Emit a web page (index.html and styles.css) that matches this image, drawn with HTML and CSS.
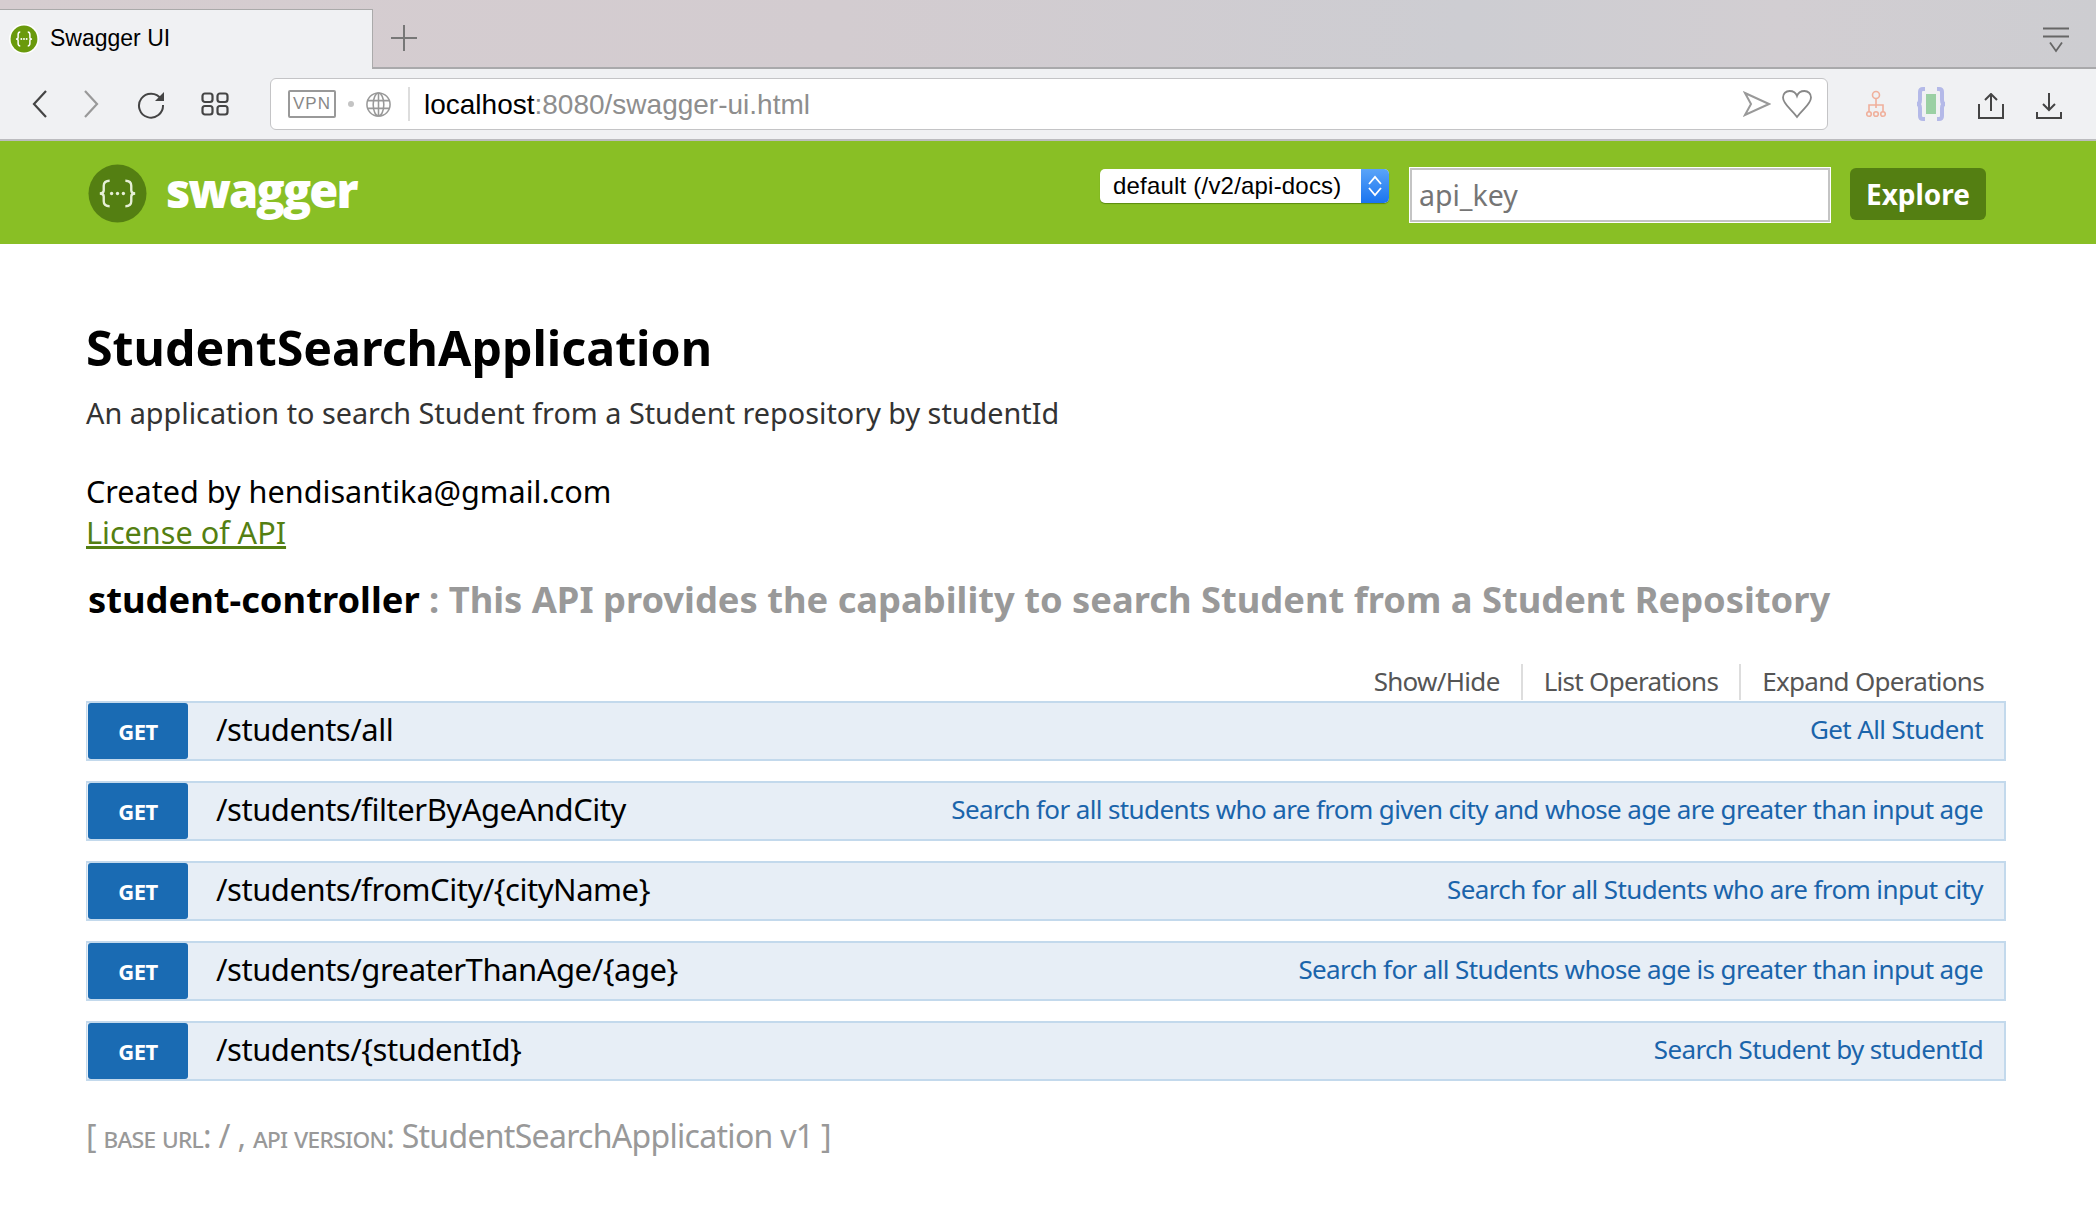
FILE: index.html
```html
<!DOCTYPE html>
<html lang="en">
<head>
  <meta charset="UTF-8" />
  <title>Swagger UI</title>
  <link rel="stylesheet" href="styles.css">
</head>
<body>
<div class="tabstrip">
  <div class="tab">
    <svg class="favicon" viewBox="0 0 28 28"><circle cx="14" cy="14" r="14" fill="#fff"/><circle cx="14" cy="14" r="12.500" fill="#6a9a0c"/><path d="M10.500 7.500 Q8.500 7.500 8.500 10 V12.500 Q8.500 14 6.500 14 Q8.500 14 8.500 15.500 V18 Q8.500 20.500 10.500 20.500 M17.500 7.500 Q19.500 7.500 19.500 10 V12.500 Q19.500 14 21.500 14 Q19.500 14 19.500 15.500 V18 Q19.500 20.500 17.500 20.500" fill="none" stroke="#fff" stroke-width="1.400"/><circle cx="11.500" cy="14" r=".9" fill="#fff"/><circle cx="14" cy="14" r=".9" fill="#fff"/><circle cx="16.500" cy="14" r=".9" fill="#fff"/></svg>
    <span>Swagger UI</span>
  </div>
  <svg class="newtab" viewBox="0 0 26 26"><path d="M13 0V26M0 13H26" stroke="#777" stroke-width="2"/></svg>
  <svg class="tablist" viewBox="0 0 26 26"><path d="M0 1.500H26M0 9.500H26" stroke="#666" stroke-width="2.200"/><path d="M7 15.500L13 24L19 15.500" fill="none" stroke="#666" stroke-width="1.800"/></svg>
</div>

<div class="toolbar">
  <div class="navbtns">
    <svg class="ico-back" viewBox="0 0 18 30"><path d="M15 2L3 15L15 28" fill="none" stroke="#444" stroke-width="2.200"/></svg>
    <svg class="ico-fwd" viewBox="0 0 18 30"><path d="M3 2L15 15L3 28" fill="none" stroke="#999" stroke-width="2.200"/></svg>
    <svg class="ico-reload" viewBox="0 0 30 30"><path d="M25 10A12 12 0 1 0 27 16" fill="none" stroke="#444" stroke-width="2"/><path d="M28 3V12H19Z" fill="#444"/></svg>
    <svg class="ico-grid" viewBox="0 0 28 24"><g fill="none" stroke="#444" stroke-width="2.200"><rect x="1.500" y="1.500" width="10" height="8.500" rx="2.500"/><rect x="16.500" y="1.500" width="10" height="8.500" rx="2.500"/><rect x="1.500" y="14" width="10" height="8.500" rx="2.500"/><rect x="16.500" y="14" width="10" height="8.500" rx="2.500"/></g></svg>
  </div>
  <div class="urlbar">
    <span class="vpn">VPN</span>
    <span class="dot"></span>
    <svg class="ico-globe" viewBox="0 0 28 28"><g fill="none" stroke="#999" stroke-width="1.600"><circle cx="14" cy="14" r="12"/><ellipse cx="14" cy="14" rx="5.500" ry="12"/><path d="M14 2V26M2.500 10H25.500M2.500 18H25.500"/></g></svg>
    <span class="url"><b>localhost</b>:8080/swagger-ui.html</span>
    <svg class="ico-send" viewBox="0 0 28 28"><path d="M2 3L26 14L2 25L8 14Z" fill="none" stroke="#999" stroke-width="2"/></svg>
    <svg class="ico-heart" viewBox="0 0 32 30"><path d="M16 28C10 20 2 15 2 8.500C2 4.500 5 2 8.500 2C12 2 15 4 16 7C17 4 20 2 23.500 2C27 2 30 4.500 30 8.500C30 15 22 20 16 28Z" fill="none" stroke="#888" stroke-width="1.800"/></svg>
  </div>
  <div class="extbtns">
    <svg class="ico-tree" viewBox="0 0 20 28"><g fill="none" stroke="#f0b09c" stroke-width="1.600"><circle cx="10" cy="5" r="3.500"/><path d="M10 8.500V18M3 22V15H17V22"/><circle cx="3" cy="24" r="2.300"/><circle cx="10" cy="24" r="2.300"/><circle cx="17" cy="24" r="2.300"/></g></svg>
    <svg class="ico-brace" viewBox="0 0 32 34"><path d="M10 2H8Q5 2 5 5V13Q5 17 2 17Q5 17 5 21V29Q5 32 8 32H10M22 2H24Q27 2 27 5V13Q27 17 30 17Q27 17 27 21V29Q27 32 24 32H22" fill="none" stroke="#b4b9e8" stroke-width="4"/><rect x="11" y="7" width="10" height="20" fill="#9bd0a4"/></svg>
    <svg class="ico-share" viewBox="0 0 28 26"><path d="M14 18V1M8 7L14 1L20 7" fill="none" stroke="#444" stroke-width="2"/><path d="M2 11V25H26V11" fill="none" stroke="#444" stroke-width="2"/></svg>
    <svg class="ico-down" viewBox="0 0 28 26"><path d="M14 0V17M8 11L14 17L20 11" fill="none" stroke="#444" stroke-width="2"/><path d="M2 19V25H26V19" fill="none" stroke="#444" stroke-width="2"/></svg>
  </div>
</div>

<header class="swagger-header">
  <div class="logo">
    <svg class="logo-mark" viewBox="0 0 60 60"><circle cx="30" cy="30" r="29.500" fill="#547f12"/><path d="M22 17Q16 17 16 22V27Q16 30 12 30Q16 30 16 33V38Q16 43 22 43M38 17Q44 17 44 22V27Q44 30 48 30Q44 30 44 33V38Q44 43 38 43" fill="none" stroke="#e6efd6" stroke-width="2.400"/><circle cx="24" cy="30" r="1.700" fill="#e6efd6"/><circle cx="30" cy="30" r="1.700" fill="#e6efd6"/><circle cx="36" cy="30" r="1.700" fill="#e6efd6"/></svg>
    <span class="logo-text">swagger</span>
  </div>
  <div class="api-form">
    <div class="spec-select">
      <span class="spec-label">default (/v2/api-docs)</span>
      <span class="spec-arrows"><svg viewBox="0 0 16 22"><path d="M2 9L8 2L14 9M2 13L8 20L14 13" fill="none" stroke="#fff" stroke-width="1.800"/></svg></span>
    </div>
    <input class="api-key" type="text" placeholder="api_key" />
    <button class="explore">Explore</button>
  </div>
</header>

<main class="content">
  <h1 class="info-title">StudentSearchApplication</h1>
  <p class="info-desc">An application to search Student from a Student repository by studentId</p>
  <p class="info-contact">Created by hendisantika@gmail.com</p>
  <a class="info-license" href="#">License of API</a>

  <h2 class="resource"><span class="resource-name">student-controller</span> <span class="resource-desc">: This API provides the capability to search Student from a Student Repository</span></h2>

  <ul class="options">
    <li>Show/Hide</li>
    <li>List Operations</li>
    <li>Expand Operations</li>
  </ul>

  <div class="operation"><span class="verb">GET</span><span class="path">/students/all</span><span class="summary">Get All Student</span></div>
  <div class="operation"><span class="verb">GET</span><span class="path">/students/filterByAgeAndCity</span><span class="summary">Search for all students who are from given city and whose age are greater than input age</span></div>
  <div class="operation"><span class="verb">GET</span><span class="path">/students/fromCity/{cityName}</span><span class="summary">Search for all Students who are from input city</span></div>
  <div class="operation"><span class="verb">GET</span><span class="path">/students/greaterThanAge/{age}</span><span class="summary">Search for all Students whose age is greater than input age</span></div>
  <div class="operation"><span class="verb">GET</span><span class="path">/students/{studentId}</span><span class="summary">Search Student by studentId</span></div>

  <p class="footer-info">[ <span class="sc">base url</span>: / , <span class="sc">api version</span>: StudentSearchApplication v1 ]</p>
</main>
</body>
</html>
```

FILE: styles.css
```css
body {
  margin: 0;
  background: #fff;
  font-family: "Noto Sans", "Open Sans", sans-serif;
  color: #000;
}

/* browser chrome */
.tabstrip {
  display: flex;
  align-items: flex-end;
  height: 69px;
  box-sizing: border-box;
  border-bottom: 2px solid #a9a9ab;
  background: linear-gradient(90deg, #d6cdd0 0%, #d3ccd0 40%, #cdcdd2 70%, #d2ced2 85%, #cdcdd1 100%);
}
.tab {
  display: flex;
  align-items: center;
  width: 373px;
  height: 60px;
  margin-bottom: -2px;
  box-sizing: border-box;
  padding: 0 0 2px 9px;
  background: #f0f1f3;
  border-top: 1px solid #aaa;
  border-right: 1px solid #aaa;
  font-family: "Liberation Sans", sans-serif;
  font-size: 23px;
}
.favicon {
  width: 30px;
  height: 30px;
  margin-right: 11px;
}
.newtab {
  width: 26px;
  height: 26px;
  margin: 0 0 16px 18px;
}
.tablist {
  width: 26px;
  height: 26px;
  margin: 0 27px 14px auto;
}
.toolbar {
  display: flex;
  align-items: center;
  height: 72px;
  box-sizing: border-box;
  background: #f0f1f3;
  border-bottom: 2px solid #bcbcbf;
}
.navbtns {
  display: flex;
  align-items: center;
  width: 270px;
  padding-left: 31px;
  box-sizing: border-box;
}
.ico-back, .ico-fwd {
  width: 18px;
  height: 30px;
}
.ico-fwd { margin-left: 33px; }
.ico-reload {
  width: 30px;
  height: 30px;
  margin-left: 36px;
}
.ico-grid {
  width: 28px;
  height: 24px;
  margin-left: 35px;
}
.urlbar {
  display: flex;
  align-items: center;
  width: 1558px;
  height: 52px;
  box-sizing: border-box;
  padding: 0 14px 0 17px;
  background: #fff;
  border: 1px solid #c4c4c6;
  border-radius: 6px;
}
.vpn {
  box-sizing: border-box;
  width: 48px;
  height: 28px;
  line-height: 24px;
  text-align: center;
  border: 2px solid #999;
  border-radius: 2px;
  color: #888;
  font-family: "Liberation Sans", sans-serif;
  font-size: 17px;
  letter-spacing: 1px;
}
.dot {
  width: 6px;
  height: 6px;
  margin-left: 12px;
  border-radius: 50%;
  background: #c4c4c4;
}
.ico-globe {
  width: 27px;
  height: 27px;
  margin: 0 16px 0 11px;
}
.url {
  flex: 1;
  height: 34px;
  padding-left: 14px;
  line-height: 36px;
  border-left: 2px solid #ddd;
  font-family: "Liberation Sans", sans-serif;
  font-size: 28px;
  color: #8e8e8e;
}
.url b {
  font-weight: normal;
  color: #000;
}
.ico-send {
  width: 28px;
  height: 28px;
}
.ico-heart {
  width: 32px;
  height: 30px;
  margin-left: 10px;
}
.extbtns {
  display: flex;
  align-items: center;
  padding-left: 38px;
}
.ico-tree {
  width: 20px;
  height: 28px;
}
.ico-brace {
  width: 32px;
  height: 34px;
  margin-left: 29px;
}
.ico-share {
  width: 28px;
  height: 26px;
  margin: 3px 0 0 30px;
}
.ico-down {
  width: 28px;
  height: 26px;
  margin: 3px 0 0 30px;
}

/* swagger header */
.swagger-header {
  display: flex;
  align-items: center;
  height: 103px;
  padding: 0 110px 0 88px;
  background: #89bf25;
}
.logo {
  display: flex;
  align-items: center;
}
.logo-mark {
  width: 59px;
  height: 59px;
  margin-top: 2px;
}
.logo-text {
  margin: -6px 0 0 19px;
  color: #fff;
  font-family: "Open Sans", sans-serif;
  font-size: 47px;
  font-weight: 800;
  letter-spacing: -2px;
}
.api-form {
  display: flex;
  align-items: center;
  margin-left: auto;
}
.spec-select {
  display: flex;
  width: 289px;
  height: 34px;
  margin-top: -13px;
  background: #fff;
  border-radius: 5px;
  box-shadow: 0 1px 1px #5b8a10;
  overflow: hidden;
}
.spec-label {
  flex: 1;
  padding-left: 13px;
  line-height: 33px;
  font-family: "Liberation Sans", sans-serif;
  font-size: 24px;
  letter-spacing: .2px;
  white-space: nowrap;
}
.spec-arrows {
  display: flex;
  flex: none;
  align-items: center;
  justify-content: center;
  width: 28px;
  background: linear-gradient(#5aa4f8, #1a74f0);
}
.spec-arrows svg {
  width: 16px;
  height: 22px;
}
.api-key {
  box-sizing: border-box;
  width: 420px;
  height: 54px;
  margin: 5px 0 0 21px;
  padding: 0 7px 1px;
  border: 2px solid #c4c4c4;
  outline: 1px solid #fff;
  background: #fff;
  font-family: "Noto Sans", sans-serif;
  font-size: 28.500px;
}
.api-key::placeholder {
  color: #757575;
}
.explore {
  width: 136px;
  height: 52px;
  margin: 3px 0 0 20px;
  padding: 0;
  border: none;
  border-radius: 6px;
  background: #547f12;
  color: #fff;
  font-family: "Noto Sans", sans-serif;
  font-size: 28px;
  font-weight: 700;
}

/* page content */
.content {
  padding: 0 90px 0 86px;
}
.info-title {
  margin: 0;
  padding-top: 71px;
  font-size: 48.300px;
  line-height: 64px;
  font-weight: 700;
}
.info-desc {
  margin: 14px 0 0;
  color: #333;
  font-size: 28.800px;
  line-height: 40px;
}
.info-contact {
  margin: 37px 0 0;
  font-size: 30.600px;
  line-height: 42px;
}
.info-license {
  display: block;
  font-size: 30.600px;
  line-height: 41px;
  color: #547f12;
}
.resource {
  margin: 21px 0 0 2px;
  font-size: 36.300px;
  line-height: 50px;
  font-weight: 700;
}
.resource-desc {
  color: #999;
}
.options {
  display: flex;
  justify-content: flex-end;
  margin: 40px 0 0;
  padding: 0 22px 0 0;
  list-style: none;
  color: #555;
  font-size: 26px;
  letter-spacing: -.7px;
  line-height: 34px;
}
.options li {
  padding: 0 21px 2px;
  border-left: 2px solid #ddd;
}
.options li:first-child { border-left: none; }
.options li:last-child { padding-right: 0; }
.operation {
  display: flex;
  align-items: center;
  height: 60px;
  box-sizing: border-box;
  margin-top: 20px;
  padding-right: 21px;
  background: #e7eef6;
  border: 2px solid #c3d9ec;
  border-left-width: 1px;
}
.options + .operation { margin-top: 1px; }
.verb {
  align-self: stretch;
  width: 100px;
  margin-left: 1px;
  background: #1a6bb3;
  border-radius: 3px;
  color: #fff;
  font-size: 22px;
  font-weight: 700;
  letter-spacing: -.5px;
  line-height: 57px;
  text-align: center;
}
.path {
  margin-left: 28px;
  padding-bottom: 4px;
  font-size: 31px;
  letter-spacing: -.47px;
}
.summary {
  margin-left: auto;
  padding-bottom: 4px;
  color: #1a64ab;
  font-size: 26px;
  letter-spacing: -.62px;
}
.footer-info {
  margin: 32px 0 0;
  color: #999;
  font-size: 32px;
  letter-spacing: -.7px;
  line-height: 46px;
}
.sc {
  font-variant: small-caps;
  font-size: 28px;
  letter-spacing: -.7px;
}
```
